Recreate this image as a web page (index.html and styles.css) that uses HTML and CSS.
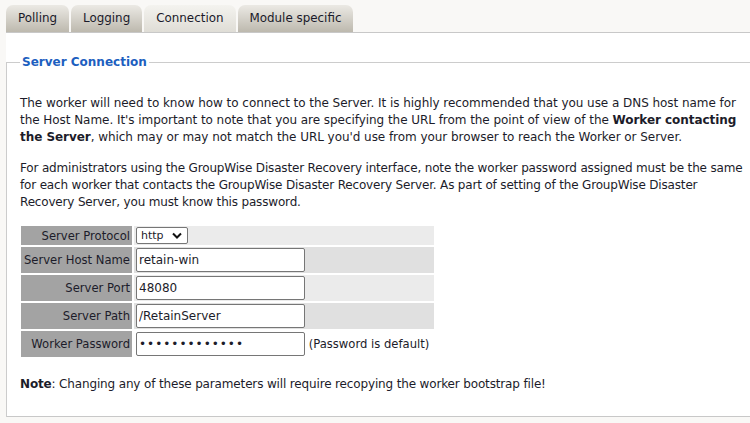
FILE: index.html
```html
<!DOCTYPE html>
<html>
<head>
<meta charset="utf-8">
<link rel="stylesheet" href="styles.css">
</head>
<body>
<div class="tabs">
  <div class="tab">Polling</div>
  <div class="tab">Logging</div>
  <div class="tab active">Connection</div>
  <div class="tab">Module specific</div>
</div>
<div class="panel">
  <fieldset class="group">
    <legend>Server Connection</legend>
    <p>The worker will need to know how to connect to the Server. It is highly recommended that you use a DNS host name for the Host Name. It's important to note that you are specifying the URL from the point of view of the <b>Worker contacting the Server</b>, which may or may not match the URL you'd use from your browser to reach the Worker or Server.</p>
    <p class="tight">For administrators using the GroupWise Disaster Recovery interface, note the worker password assigned must be the same for each worker that contacts the GroupWise Disaster Recovery Server. As part of setting of the GroupWise Disaster Recovery Server, you must know this password.</p>
    <table class="form">
      <tr class="r1 first">
        <td class="lbl">Server Protocol</td>
        <td class="val"><span class="select">http <svg width="10" height="7" viewBox="0 0 10 7"><path d="M1 1.5 L5 5.5 L9 1.5" fill="none" stroke="#111" stroke-width="2"/></svg></span></td>
      </tr>
      <tr class="r2">
        <td class="lbl">Server Host Name</td>
        <td class="val"><input class="field" type="text" value="retain-win"></td>
      </tr>
      <tr class="r1">
        <td class="lbl">Server Port</td>
        <td class="val"><input class="field" type="text" value="48080"></td>
      </tr>
      <tr class="r2">
        <td class="lbl">Server Path</td>
        <td class="val"><input class="field" type="text" value="/RetainServer"></td>
      </tr>
      <tr class="r3">
        <td class="lbl">Worker Password</td>
        <td class="val"><input class="field pw" type="password" value="1234567890123"> <span class="hint">(Password is default)</span></td>
      </tr>
    </table>
    <p class="note"><b>Note</b>: Changing any of these parameters will require recopying the worker bootstrap file!</p>
  </fieldset>
</div>
</body>
</html>
```
FILE: styles.css
```css
html, body {
  margin: 0;
  padding: 0;
  background: #f9f8f6;
  overflow: hidden;
}
body {
  font-family: "DejaVu Sans", Verdana, sans-serif;
  font-size: 12px;
  color: #1c1c2a;
  width: 780px;
}
.tabs {
  display: flex;
  gap: 2px;
  padding: 5px 0 0 6px;
  height: 27px;
}
.tab {
  height: 27px;
  line-height: 27px;
  padding: 0 12px;
  font-size: 11.9px;
  border-radius: 7px 7px 0 0;
  background: linear-gradient(#ebe9e4, #bdb9ae);
  color: #1a1a2a;
}
.tab.active {
  background: linear-gradient(#f4f3ef, #dfddd6);
}
.panel {
  margin-left: 6px;
  background: #fff;
  border-top: 1px solid #c8c8c8;
  padding-top: 22px;
  height: 361px;
  border-bottom: 1px solid #c8c8c8;
}
.group {
  margin: 0;
  padding: 26px 13px 0 13px;
  border: 1px solid #cccccc;
  border-bottom: none;
  border-right: none;
  height: 335px;
  min-inline-size: 0;
}
.group legend {
  padding: 0 2px;
  margin-left: 0;
  font-size: 12px;
  font-weight: bold;
  color: #1d5fc0;
}
.group p {
  margin: 0 0 14px 0;
  width: 724px;
  line-height: 17px;
  letter-spacing: -0.05px;
}
.group p.tight {
  letter-spacing: -0.17px;
}
.form {
  border-spacing: 2px;
  margin: -1px 0 0 -1px;
  font-size: 11.6px;
}
.form td {
  padding: 0;
}
.lbl {
  background: #a3a3a3;
  text-align: right;
  width: 107px;
  padding: 0 2px 0 2px !important;
  white-space: nowrap;
}
.val {
  width: 296px;
  height: 26px;
  padding: 0 2px !important;
}
.r1 .val { background: #ebebeb; }
.r2 .val { background: #e0e0e0; }
.r3 .val { background: #ffffff; }
.first td { height: 19px !important; }
.select {
  display: inline-flex;
  align-items: center;
  gap: 8px;
  height: 15px;
  padding: 0 5px 0 4px;
  border: 1px solid #767676;
  border-radius: 2px;
  background: #fff;
  font-size: 11px;
  vertical-align: middle;
}
.field {
  box-sizing: border-box;
  width: 169px;
  height: 24px;
  margin: 0;
  padding: 1px 2px;
  border: 1px solid #767676;
  border-radius: 2px;
  font-family: "DejaVu Sans", Verdana, sans-serif;
  font-size: 12px;
  color: #1c1c2a;
  vertical-align: middle;
}
.field.pw {
  letter-spacing: 1px;
}
.hint {
  vertical-align: middle;
}
.group p.note {
  margin-top: 17px;
  letter-spacing: -0.15px;
}
```
